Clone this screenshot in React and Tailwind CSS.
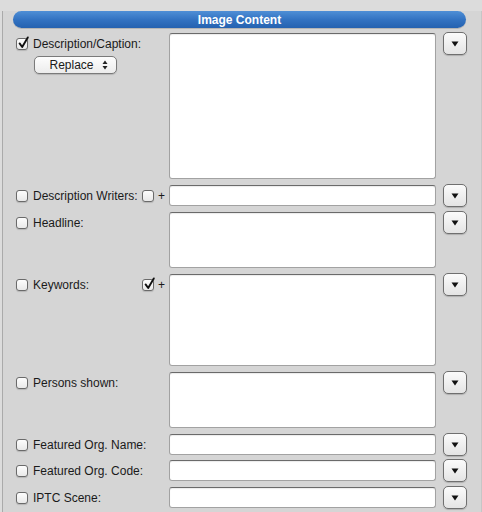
import React from "react";

function Check({ checked }) {
  return (
    <div className="relative w-[12px] h-[12px] shrink-0 rounded-[3px] border border-[#6a6a6a] bg-gradient-to-b from-[#fdfdfd] to-[#e9e9e9] shadow-[0_1px_1px_rgba(0,0,0,0.15)]">
      {checked && (
        <svg className="absolute left-[0px] top-[-3px]" width="14" height="14" viewBox="0 0 14 14">
          <path d="M2.6 7.4 L5.2 11 L10.8 1.4" fill="none" stroke="#111" strokeWidth="1.9" strokeLinecap="round" strokeLinejoin="round" />
        </svg>
      )}
    </div>
  );
}

function DropBtn() {
  return (
    <div className="ml-[7px] mt-[-1px] w-[24px] h-[23px] shrink-0 rounded-[5px] border border-[#6f6f6f] bg-gradient-to-b from-[#fbfbfb] to-[#e4e4e4] shadow-[0_1px_1px_rgba(0,0,0,0.18)] flex items-center justify-center">
      <svg width="8" height="6" viewBox="0 0 8 6" className="mt-[1px]">
        <path d="M0.5 0.5 L7.5 0.5 L4 5.5 Z" fill="#111" />
      </svg>
    </div>
  );
}

function Field({ h }) {
  return (
    <div
      className={`w-[267px] ${h} shrink-0 rounded-[3px] bg-white border border-[#a2a2a2] border-t-[#6a6a6a] shadow-[inset_0_1px_1px_rgba(0,0,0,0.08)]`}
    />
  );
}

function Row({ label, h, mt, extra, extraChecked, checked, children }) {
  return (
    <div className={`flex items-start ${mt}`}>
      <div className="w-[153px] shrink-0 flex flex-col">
        <div className="flex items-center h-[21px]">
          <Check checked={checked} />
          <span className="ml-[5px] flex-1 text-[12px] text-[#1a1a1a] whitespace-nowrap leading-none">{label}</span>
          {extra && (
            <>
              <Check checked={extraChecked} />
              <span className="w-[15px] text-center text-[12px] text-[#1a1a1a] leading-none">+</span>
            </>
          )}
        </div>
        {children}
      </div>
      <Field h={h} />
      <DropBtn />
    </div>
  );
}

export default function App() {
  return (
    <div className="w-[482px] h-[512px] bg-[#dcdcdc] pl-[2px] overflow-hidden font-['Liberation_Sans',Arial,sans-serif]">
      <div className="h-full bg-[#d5d5d5] border-l border-[#aaaaaa] border-r border-r-[#c6c6c6] pl-[13px]">
        <div className="ml-[-3px] mt-[11px] w-[453px] h-[17px] rounded-full bg-gradient-to-b from-[#4f8fd6] via-[#3373c2] to-[#2562b0] flex items-center justify-center shadow-[0_1px_0_rgba(0,0,0,0.15)]">
          <span className="text-white text-[12px] font-bold leading-none">Image Content</span>
        </div>

        <div className="flex flex-col">
          <Row label="Description/Caption:" h="h-[146px]" mt="mt-[5px]" checked>
            <div className="ml-[18px] mt-[2px] w-[83px] h-[18px] rounded-[5px] border border-[#7a7a7a] bg-gradient-to-b from-[#fdfdfd] to-[#ececec] shadow-[0_1px_1px_rgba(0,0,0,0.15)] flex items-center">
              <span className="flex-1 text-center pl-[6px] text-[12px] text-[#1a1a1a] leading-none">Replace</span>
              <svg width="6" height="10" viewBox="0 0 6 10" className="mr-[8px]">
                <path d="M0.5 4 L5.5 4 L3 0.5 Z" fill="#222" />
                <path d="M0.5 6 L5.5 6 L3 9.5 Z" fill="#222" />
              </svg>
            </div>
          </Row>
          <Row label="Description Writers:" h="h-[21px]" mt="mt-[6px]" extra />
          <Row label="Headline:" h="h-[56px]" mt="mt-[5px]" />
          <Row label="Keywords:" h="h-[92px]" mt="mt-[6px]" extra extraChecked />
          <Row label="Persons shown:" h="h-[56px]" mt="mt-[6px]" />
          <Row label="Featured Org. Name:" h="h-[21px]" mt="mt-[6px]" />
          <Row label="Featured Org. Code:" h="h-[21px]" mt="mt-[4px]" />
          <Row label="IPTC Scene:" h="h-[21px]" mt="mt-[5px]" />
        </div>
      </div>
    </div>
  );
}
